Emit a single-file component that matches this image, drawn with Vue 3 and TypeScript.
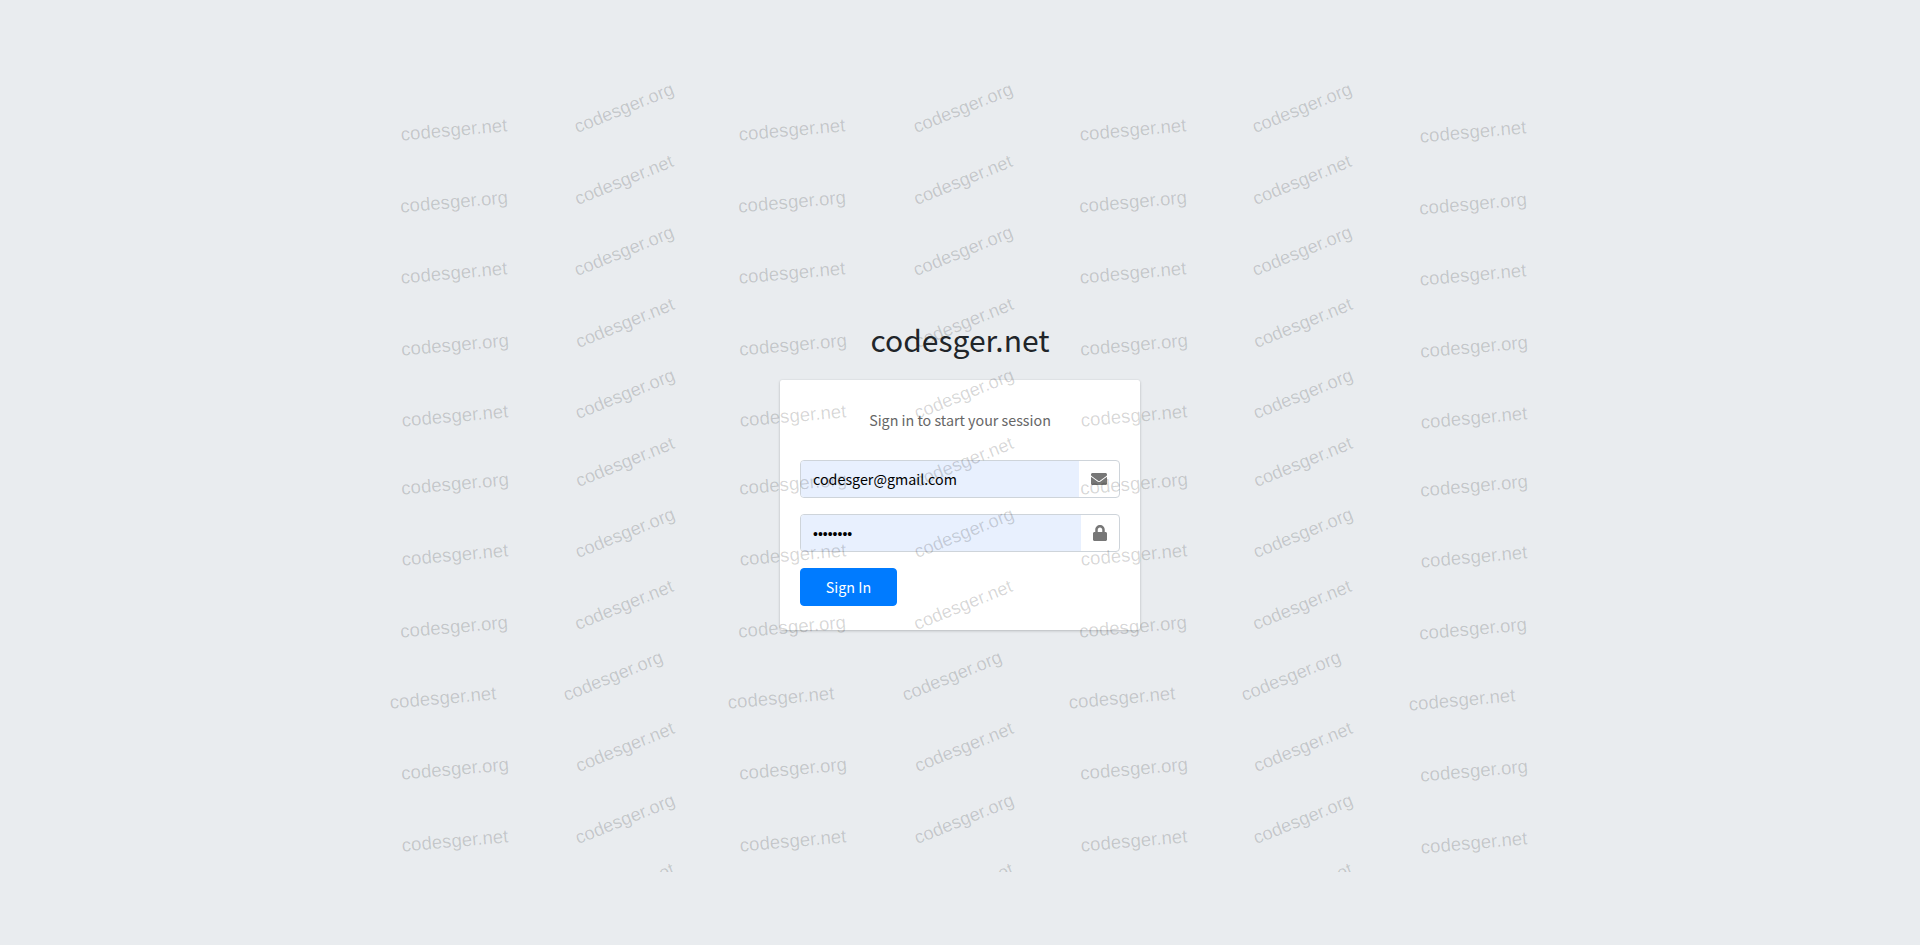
<script setup lang="ts">
interface Mark {
  text: string
  x: number
  y: number
  angle: number
  size: number
}

const colX = [454, 624, 792, 963, 1132.5, 1302, 1473]
const colDy = [0, -22, 0, -22, 0, -22, 2]
const rowY = [130, 202, 273, 345, 416, 483.5, 554.5, 627, 698, 769, 841, 910]
const rowDx = [0, 0, 0, 1, 1, 1, 1, 0, -11, 1, 1, 1]

const marks: Mark[] = []
rowY.forEach((y, r) => {
  colX.forEach((x, c) => {
    // the last row only shows the tips of the steep column
    if (r === 11 && c % 2 === 0) return
    const steep = c % 2 === 1
    marks.push({
      text: (r + c) % 2 === 0 ? 'codesger.net' : 'codesger.org',
      x: x + rowDx[r],
      y: y + colDy[c],
      angle: steep ? -22 : -5,
      size: steep ? 18.3 : 18.67,
    })
  })
})
</script>

<template>
  <div class="page">
    <div class="login-box">
      <div class="logo">codesger.net</div>
      <div class="card">
        <p class="msg">Sign in to start your session</p>
        <div class="group">
          <input class="field" type="email" value="codesger@gmail.com" />
          <span class="addon">
            <svg class="icon-env" viewBox="0 0 512 512"><path d="M502.3 190.8c3.9-3.1 9.7-.2 9.7 4.7V400c0 26.5-21.5 48-48 48H48c-26.5 0-48-21.5-48-48V195.6c0-5 5.7-7.8 9.7-4.7 22.4 17.4 52.1 39.5 154.1 113.6 21.1 15.4 56.7 47.8 92.2 47.6 35.7.3 72-32.8 92.3-47.6 102-74.1 131.6-96.3 154-113.7zM256 320c23.2.4 56.6-29.2 73.4-41.4 132.7-96.3 142.8-104.7 173.4-128.7 5.8-4.5 9.2-11.5 9.2-18.9v-19c0-26.5-21.5-48-48-48H48C21.5 64 0 85.5 0 112v19c0 7.4 3.4 14.3 9.2 18.9 30.6 23.9 40.7 32.4 173.4 128.7 16.8 12.2 50.2 41.8 73.4 41.4z" /></svg>
          </span>
        </div>
        <div class="group">
          <input class="field pass" type="password" value="password" />
          <span class="addon">
            <svg class="icon-lock" viewBox="0 0 448 512"><path d="M400 224h-24v-72C376 68.2 307.8 0 224 0S72 68.2 72 152v72H48c-26.5 0-48 21.5-48 48v192c0 26.5 21.5 48 48 48h352c26.5 0 48-21.5 48-48V272c0-26.5-21.5-48-48-48zm-104 0H152v-72c0-39.7 32.3-72 72-72s72 32.3 72 72v72z" /></svg>
          </span>
        </div>
        <button class="submit" type="button">Sign In</button>
      </div>
    </div>

    <div class="marks">
      <span
        v-for="(m, i) in marks"
        :key="i"
        class="mark"
        :style="{ left: m.x + 'px', top: m.y + 'px', fontSize: m.size + 'px', transform: `translate(-50%, -50%) rotate(${m.angle}deg)` }"
      >{{ m.text }}</span>
    </div>
  </div>
</template>

<style>
body {
  background: #e9ecef;
}
</style>

<style scoped>
.page {
  position: relative;
  height: 100vh;
  display: flex;
  align-items: center;
  justify-content: center;
  overflow: hidden;
  background: #e9ecef;
  font-family: "Noto Sans CJK SC", "Noto Sans", sans-serif;
  font-size: 14.3px;
  line-height: 24px;
  color: #212529;
}
.login-box {
  width: 360px;
}
.logo {
  height: 50.4px;
  margin-bottom: 14.4px;
  font-size: 30px;
  line-height: 48.4px;
  text-align: center;
}
.card {
  padding: 20px 20px 24px;
  background: #fff;
  border-radius: 2px;
  box-shadow: 0 0 1px rgba(0, 0, 0, 0.125), 0 1px 3px rgba(0, 0, 0, 0.2);
}
.msg {
  margin: 0;
  padding: 8px 20px 28px;
  text-align: center;
  color: #666;
}
.group {
  display: flex;
  height: 38px;
  margin-bottom: 16px;
  border: 1px solid #ced4da;
  border-radius: 4px;
  box-sizing: border-box;
  overflow: hidden;
}
.field {
  flex: 1;
  min-width: 0;
  border: 0;
  outline: 0;
  padding: 0 12px;
  background: #e8f0fe;
  font: inherit;
  color: #000;
}
.pass {
  padding-top: 3px;
  font-family: "Liberation Sans", Arial, sans-serif;
  font-size: 14px;
}
.addon {
  display: flex;
  align-items: center;
  padding: 0 12px;
  fill: #777;
}
.icon-env {
  width: 16px;
  height: 16px;
  display: block;
}
.icon-lock {
  width: 14px;
  height: 16px;
  display: block;
}
.submit {
  display: block;
  width: 97px;
  height: 38px;
  padding: 0;
  border: 1px solid #007bff;
  border-radius: 4px;
  background: #007bff;
  color: #fff;
  font: inherit;
}
.marks {
  position: absolute;
  left: 0;
  top: 0;
  width: 100%;
  height: 872px;
  overflow: hidden;
  pointer-events: none;
}
.mark {
  position: absolute;
  white-space: nowrap;
  font-family: "Liberation Sans", Arial, sans-serif;
  line-height: 22px;
  color: rgba(0, 0, 0, 0.16);
}
</style>
